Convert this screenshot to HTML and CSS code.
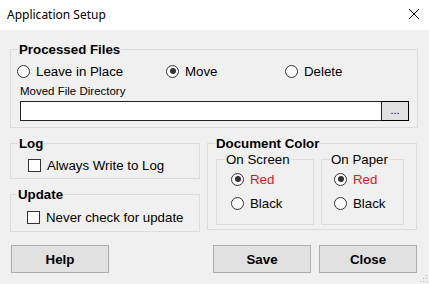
FILE: index.html
```html
<!DOCTYPE html>
<html lang="en">
	<head>
		<meta charset="UTF-8" />
		<title>Application Setup</title>
		<link rel="stylesheet" href="styles.css">
	</head>
	<body>
		<div class="window">
			<div class="titlebar">
				<span class="title">Application Setup</span>
				<svg class="close" width="12" height="12" viewBox="0 0 12 12">
					<path d="M1 1 L11 11 M11 1 L1 11" stroke="#000" stroke-width="1" fill="none" />
				</svg>
			</div>
			<div class="content">
				<fieldset class="group processed">
					<legend>Processed Files</legend>
					<div class="radio-row">
						<label class="radio"><span class="circle"></span>Leave in Place</label>
						<label class="radio"><span class="circle checked"></span>Move</label>
						<label class="radio"><span class="circle"></span>Delete</label>
					</div>
					<div class="dir">
						<div class="dir-label">Moved File Directory</div>
						<div class="dir-field">
							<div class="dir-input"></div>
							<div class="browse">...</div>
						</div>
					</div>
				</fieldset>

				<div class="lower">
					<div class="left-col">
						<fieldset class="group log">
							<legend>Log</legend>
							<label class="check"><span class="box"></span>Always Write to Log</label>
						</fieldset>
						<fieldset class="group update">
							<legend>Update</legend>
							<label class="check"><span class="box"></span>Never check for update</label>
						</fieldset>
					</div>
					<fieldset class="group doc-color">
						<legend>Document Color</legend>
						<div class="sub-groups">
							<fieldset class="sub on-screen">
								<legend>On Screen</legend>
								<div class="options">
									<label class="radio red"><span class="circle checked"></span>Red</label>
									<label class="radio"><span class="circle"></span>Black</label>
								</div>
							</fieldset>
							<fieldset class="sub on-paper">
								<legend>On Paper</legend>
								<div class="options">
									<label class="radio red"><span class="circle checked"></span>Red</label>
									<label class="radio"><span class="circle"></span>Black</label>
								</div>
							</fieldset>
						</div>
					</fieldset>
				</div>

				<div class="buttons">
					<button class="btn help">Help</button>
					<button class="btn save">Save</button>
					<button class="btn">Close</button>
				</div>
			</div>
			<div class="grip"></div>
		</div>
	</body>
</html>
```

FILE: styles.css
```css
body {
	margin: 0;
	font-family: "Liberation Sans", Arial, sans-serif;
	font-size: 13.3px;
	color: #000;
	background-color: #f0f0f0;
}
.window {
	width: 429px;
	height: 284px;
	background-color: #f0f0f0;
	position: relative;
	overflow: hidden;
}
.titlebar {
	height: 30px;
	background-color: #fff;
	display: flex;
	align-items: center;
	justify-content: space-between;
	padding: 0 9px 0 7px;
}
.title {
	font-family: "Noto Sans", "Open Sans", sans-serif;
	font-size: 12px;
	margin-top: -2px;
}
.close {
	margin-top: -3px;
}
.content {
	padding-left: 10px;
}
.group {
	margin: 0;
	padding: 0;
	border: 1px solid #dcdcdc;
	box-sizing: border-box;
	min-width: 0;
}
.group legend {
	font-weight: bold;
	line-height: 15px;
	padding: 0 1px;
	margin-left: 7px;
}
.processed {
	margin-top: 12px;
	width: 408px;
	height: 86px;
}
.radio-row {
	display: grid;
	grid-template-columns: 149px 119px auto;
	margin: 4px 0 0 6px;
}
.radio {
	display: flex;
	align-items: center;
	height: 20px;
}
.circle {
	width: 11px;
	height: 11px;
	border: 1px solid #333;
	border-radius: 50%;
	background-color: #fff;
	margin-right: 6px;
	position: relative;
	flex: none;
}
.circle.checked::after {
	content: "";
	position: absolute;
	left: 2.5px;
	top: 2.5px;
	width: 6px;
	height: 6px;
	border-radius: 50%;
	background-color: #333;
}
.dir {
	margin-left: 9px;
}
.dir-label {
	font-size: 11.5px;
	line-height: 14px;
	margin-top: 3px;
}
.dir-field {
	display: flex;
	margin-top: 3px;
}
.dir-input {
	width: 362px;
	height: 20px;
	box-sizing: border-box;
	border: 1px solid #222;
	background-color: #fff;
}
.browse {
	width: 27px;
	height: 20px;
	box-sizing: border-box;
	border: 1px solid #000;
	border-left: none;
	background-color: #e1e1e1;
	font-size: 11px;
	line-height: 16px;
	text-align: center;
}
.lower {
	display: flex;
	margin-top: 8px;
}
.left-col {
	width: 190px;
	display: flex;
	flex-direction: column;
	gap: 8px;
}
.log {
	height: 43px;
}
.log .check {
	margin: 4px 0 0 17px;
}
.update {
	height: 45px;
}
.update .check {
	margin: 5px 0 0 16px;
}
.update legend {
	margin-left: 6px;
}
.check {
	display: flex;
	align-items: center;
	height: 20px;
}
.box {
	width: 11px;
	height: 11px;
	border: 1px solid #333;
	background-color: #fff;
	margin-right: 6px;
	flex: none;
}
.doc-color {
	margin-left: 7px;
	width: 210px;
	height: 94px;
}
.sub-groups {
	display: flex;
	gap: 7px;
	margin: 1px 0 0 8px;
}
.sub {
	margin: 0;
	padding: 0;
	border: 1px solid #dcdcdc;
	box-sizing: border-box;
	height: 73px;
	min-width: 0;
}
.sub legend {
	font-weight: normal;
	line-height: 15px;
	padding: 0 1px;
	margin-left: 8px;
}
.options {
	display: flex;
	flex-direction: column;
	gap: 4px;
	margin: 2px 0 0 14px;
}
.on-screen {
	width: 98px;
}
.on-paper {
	width: 83px;
}
.on-paper .options {
	margin-left: 12px;
}
.red {
	color: #e3141f;
}
.buttons {
	display: flex;
	margin-top: 13px;
	padding-left: 1px;
	gap: 8px;
}
.btn {
	width: 98px;
	height: 28px;
	border: 1px solid #adadad;
	background-color: #e1e1e1;
	font-family: "Liberation Sans", Arial, sans-serif;
	font-size: 13.3px;
	font-weight: bold;
	color: #000;
	padding: 0;
}
.help {
	margin-right: 96px;
}
.grip {
	position: absolute;
	right: 2px;
	bottom: 2px;
	width: 8px;
	height: 8px;
	background-image: radial-gradient(circle, #b8b8b8 1px, transparent 1px);
	background-size: 3px 3px;
	clip-path: polygon(100% 0, 100% 100%, 0 100%);
}
```
